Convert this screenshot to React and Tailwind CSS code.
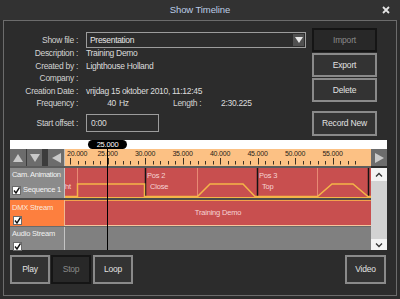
import React from 'react'

function Btn({ children, disabled, className = '' }) {
  return (
    <div
      className={
        'flex items-center justify-center border-2 tracking-[-0.2px] ' +
        (disabled ? 'border-[#151515] bg-[#282828] text-[#8a8a8a] ' : 'border-[#8a8a8a] bg-[#333333] text-[#e2e2e2] ') +
        className
      }
    >
      {children}
    </div>
  )
}

function Label({ children }) {
  return <span className="w-[74px] shrink-0 text-right text-[#d2d2d2]">{children}</span>
}

function Check() {
  return (
    <div className="w-[9px] h-[9px] shrink-0 bg-white border border-[#6a6a6a] flex items-center justify-center">
      <svg width="7" height="7" viewBox="0 0 7 7">
        <path d="M1 3.5 L3 6 L6.5 0.5" fill="none" stroke="#111" strokeWidth="1.4" />
      </svg>
    </div>
  )
}

function Tri({ dir }) {
  const pts = {
    up: '1,10 6,2 11,10',
    down: '1,2 11,2 6,10',
    left: '11,1 11,11 2,6',
    right: '2,1 2,11 11,6',
  }[dir]
  return (
    <svg width="12" height="12" viewBox="0 0 12 12">
      <polygon points={pts} fill="#c9c9c9" />
    </svg>
  )
}

function Ruler() {
  const ticks = []
  for (let t = 19; t <= 58; t++) {
    const x = Math.round(80 + (t - 30) * 7.5) + 0.5
    if (x < 1 || x > 305) continue
    const major = t % 5 === 0
    ticks.push(<line key={t} x1={x} x2={x} y1={major ? 9 : 12} y2={15.5} stroke="#3b3124" strokeWidth="1" />)
  }
  const labels = [20, 25, 30, 35, 40, 45, 50, 55]
  return (
    <svg width="306" height="17" className="block bg-[#fcc184]">
      {ticks}
      {labels.map((t) => {
        const x = 80 + (t - 30) * 7.5
        return (
          <text
            key={t}
            x={t === 20 ? 2 : x}
            y="6.8"
            textAnchor={t === 20 ? 'start' : 'middle'}
            fontSize="7"
            fontFamily="Liberation Sans, Arial, sans-serif"
            fill="#2a2118"
          >
            {t}.000
          </text>
        )
      })}
    </svg>
  )
}

function CamTrack() {
  const txt = { fontSize: 7.5, fontFamily: 'Liberation Sans, Arial, sans-serif', fill: '#f6d4d4' }
  return (
    <svg width="306" height="30" className="block">
      <rect width="306" height="30" fill="#c84f4f" />
      {[12.5, 132.5, 252.5].map((x) => (
        <line key={x} x1={x} x2={x} y1="0" y2="30" stroke="#e88a74" strokeWidth="1" />
      ))}
      {[80.5, 192.5, 303.5].map((x) => (
        <line key={x} x1={x} x2={x} y1="0" y2="30" stroke="#141414" strokeWidth="1.5" />
      ))}
      <path
        d="M0 28.5 H12.5 V16 H79.5 V28.5 H132.5 L145 16 H178 L190 28.5 H252.5 L267 16 H288 L303 28.5 H306"
        fill="none"
        stroke="#f4b548"
        strokeWidth="1.5"
      />
      <line x1="0" x2="306" y1="29.5" y2="29.5" stroke="#f4b548" strokeWidth="1" />
      <text x="0" y="21" {...txt}>ht</text>
      <text x="82" y="9.8" {...txt}>Pos 2</text>
      <text x="85" y="21" {...txt}>Close</text>
      <text x="194" y="9.8" {...txt}>Pos 3</text>
      <text x="197" y="21" {...txt}>Top</text>
    </svg>
  )
}

function Timeline() {
  return (
    <div className="relative ml-[6px] w-[377px] h-[110px] flex flex-col text-[7.5px] tracking-[-0.2px] whitespace-nowrap">
      <div className="h-[9px] bg-white" />
      <div className="h-[17px] flex">
        <div className="w-[55px] flex bg-[#3c3c3c] border-r border-[#bdbdbd]">
          <div className="w-[16px] bg-[#6c6c6c] flex items-center justify-center"><Tri dir="up" /></div>
          <div className="ml-[1px] w-[15px] bg-[#6c6c6c] flex items-center justify-center"><Tri dir="down" /></div>
          <div className="ml-[6px] w-[16px] bg-[#6c6c6c] flex items-center justify-center"><Tri dir="left" /></div>
        </div>
        <Ruler />
        <div className="w-[16px] bg-[#6c6c6c] flex items-center justify-center"><Tri dir="right" /></div>
      </div>
      <div className="h-[2px] bg-[#5c5c5c] w-[361px]" />
      <div className="flex">
        <div className="w-[361px] flex flex-col">
          <div className="h-[30px] flex">
            <div className="w-[55px] shrink-0 overflow-hidden bg-[#8b8b8b] border-r border-[#c4c4c4] text-[#f4f4f4] pl-[2px] pr-[3px] pt-[3px] flex flex-col">
              <span className="tracking-[-0.3px]">Cam. Animation</span>
              <div className="mt-[7px] flex items-center">
                <Check />
                <span className="ml-auto">Sequence 1</span>
              </div>
            </div>
            <CamTrack />
          </div>
          <div className="h-[2px] bg-[#4a4a4a]" />
          <div className="h-[26px] flex">
            <div className="w-[55px] shrink-0 bg-[#fd7f3e] border-r border-[#f0b890] text-[#fbe9df] pl-[2px] pt-[4px] flex flex-col">
              <span>DMX Stream</span>
              <div className="mt-[4px] ml-[1px]"><Check /></div>
            </div>
            <div className="w-[306px] bg-[#c84f4f] border-t border-[#f3a24c] border-b border-b-[#f7c59c] flex items-center justify-center text-[#f6d4d4]">
              Training Demo
            </div>
          </div>
          <div className="h-[1px] bg-[#6a6a6a]" />
          <div className="h-[23px] flex">
            <div className="w-[55px] shrink-0 bg-[#888888] border-r border-[#c4c4c4] text-[#f0f0f0] pl-[2px] pt-[3px] flex flex-col">
              <span>Audio Stream</span>
              <div className="mt-[4px] ml-[1px]"><Check /></div>
            </div>
            <div className="w-[306px] bg-[#808080]" />
          </div>
        </div>
        <div className="w-[16px] h-[82px] bg-[#d2d2d2] flex flex-col justify-between">
          <div className="h-[13px] bg-[#f3f3f3] flex items-center justify-center">
            <svg width="8" height="6" viewBox="0 0 8 6"><path d="M1 4.5 L4 1.5 L7 4.5" fill="none" stroke="#333" strokeWidth="1.3" /></svg>
          </div>
          <div className="h-[11px] bg-[#f3f3f3] flex items-center justify-center">
            <svg width="8" height="6" viewBox="0 0 8 6"><path d="M1 1.5 L4 4.5 L7 1.5" fill="none" stroke="#333" strokeWidth="1.3" /></svg>
          </div>
        </div>
      </div>
      <div className="absolute left-[97px] top-[8px] w-px h-[102px] bg-black" />
      <div className="absolute left-[78px] top-0 w-[39px] h-[9px] rounded-full bg-black text-white text-[7.5px] flex items-center justify-center">
        25.000
      </div>
    </div>
  )
}

export default function App() {
  return (
    <div className="w-[400px] h-[299px] overflow-hidden bg-[#2c2c2c] font-['Liberation_Sans',Arial,sans-serif] text-[8.5px] tracking-[-0.3px] leading-none text-[#dcdcdc]">
      <div className="relative h-[20px] bg-[#323232] flex items-center justify-center text-[9.5px] tracking-[-0.1px] text-[#bccde6]">
        Show Timeline
        <svg className="absolute right-[10px] top-[6px]" width="8" height="8" viewBox="0 0 8 8">
          <path d="M1 1 L7 7 M7 1 L1 7" stroke="#e4e4e4" strokeWidth="1.8" />
        </svg>
      </div>
      <div className="mx-[3px] h-[276px] border border-[#6c6c6c] flex flex-col">
        <div className="h-[119px] flex">
          <div className="w-[302px] pt-[11px] flex flex-col">
            <div className="h-[16px] flex items-center">
              <Label>Show file :</Label>
              <div className="ml-[8px] w-[220px] h-[16px] border border-[#9c9c9c] flex items-center">
                <span className="pl-[3px] text-[#e6e6e6]">Presentation</span>
                <div className="ml-auto mr-[1px] w-[11px] h-[12px] bg-[#505050] flex items-center justify-center">
                  <svg width="8" height="6" viewBox="0 0 8 6"><polygon points="0,0 8,0 4,6" fill="#e8e8e8" /></svg>
                </div>
              </div>
            </div>
            <div className="mt-[-1px] h-[12.5px] flex items-center">
              <Label>Description :</Label>
              <span className="ml-[8px]">Training Demo</span>
            </div>
            <div className="h-[12.5px] flex items-center">
              <Label>Created by :</Label>
              <span className="ml-[8px]">Lighthouse Holland</span>
            </div>
            <div className="h-[12.5px] flex items-center">
              <Label>Company :</Label>
            </div>
            <div className="h-[12.5px] flex items-center">
              <Label>Creation Date :</Label>
              <span className="ml-[8px]">vrijdag 15 oktober 2010, 11:12:45</span>
            </div>
            <div className="h-[12.5px] flex items-center">
              <Label>Frequency :</Label>
              <div className="ml-[8px] w-[87px] flex">
                <span className="w-[30px] text-right">40</span>
                <span className="ml-[3px]">Hz</span>
              </div>
              <span className="w-[48px] text-[#d2d2d2]">Length :</span>
              <span>2:30.225</span>
            </div>
            <div className="mt-[4.5px] h-[18px] flex items-center">
              <Label>Start offset :</Label>
              <div className="ml-[8px] w-[73px] h-[18px] border border-[#9c9c9c] flex items-center pl-[4px]">0:00</div>
            </div>
          </div>
          <div className="ml-[6px] w-[65px] pt-[7px] flex flex-col">
            <Btn disabled className="h-[24px]">Import</Btn>
            <Btn className="mt-[1px] h-[24px]">Export</Btn>
            <Btn className="mt-[1px] h-[24px]">Delete</Btn>
            <Btn className="mt-[9px] h-[25px]">Record New</Btn>
          </div>
        </div>
        <Timeline />
        <div className="mt-[5px] h-[29px] flex pl-[6px] pr-[10px]">
          <Btn className="w-[40px]">Play</Btn>
          <Btn disabled className="ml-[1px] w-[40px]">Stop</Btn>
          <Btn className="ml-[2px] w-[40px]">Loop</Btn>
          <Btn className="ml-auto w-[41px]">Video</Btn>
        </div>
      </div>
    </div>
  )
}
